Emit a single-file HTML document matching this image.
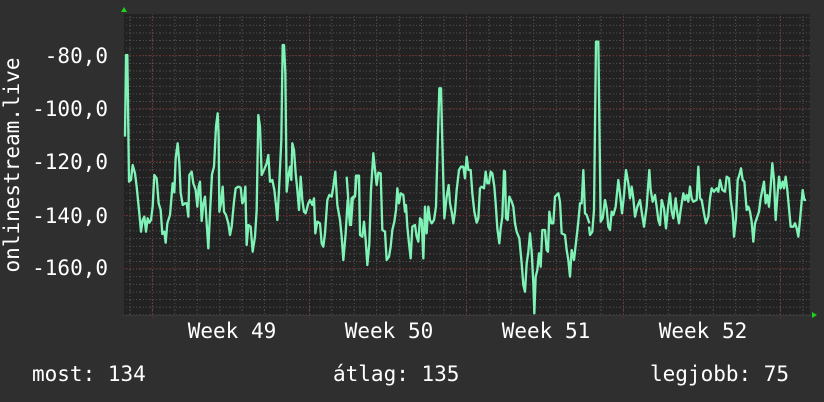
<!DOCTYPE html>
<html><head><meta charset="utf-8"><style>
html,body{margin:0;padding:0;background:#2f2f2f;}
body{width:824px;height:402px;overflow:hidden;position:relative;font-family:"DejaVu Sans Mono","Liberation Mono",monospace;color:#fff;}
</style></head><body>
<svg width="824" height="402" style="position:absolute;left:0;top:0" font-family="DejaVu Sans Mono, Liberation Mono, monospace" fill="#fff">
<defs>
<pattern id="hg" x="0" y="55.3" width="10" height="7.619" patternUnits="userSpaceOnUse">
<line x1="0" y1="0.5" x2="10" y2="0.5" stroke="#4e4e4e" stroke-width="1" stroke-dasharray="1,2"/>
</pattern>
<pattern id="vg" x="129.5" y="0" width="22.43" height="10" patternUnits="userSpaceOnUse">
<line x1="0.5" y1="0" x2="0.5" y2="10" stroke="#4e4e4e" stroke-width="1" stroke-dasharray="1,2"/>
</pattern>
</defs>
<rect x="124" y="14" width="686" height="301" fill="#222"/>
<rect x="124" y="14" width="686" height="301" fill="url(#hg)"/>
<rect x="124" y="14" width="686" height="301" fill="url(#vg)"/>
<g stroke="#7a2a2a" stroke-width="1" stroke-dasharray="1,2">
<line x1="124" y1="55.5" x2="810" y2="55.5"/>
<line x1="124" y1="108.5" x2="810" y2="108.5"/>
<line x1="124" y1="161.5" x2="810" y2="161.5"/>
<line x1="124" y1="215.5" x2="810" y2="215.5"/>
<line x1="124" y1="268.5" x2="810" y2="268.5"/>
<line x1="152.5" y1="14" x2="152.5" y2="318"/>
<line x1="309.5" y1="14" x2="309.5" y2="318"/>
<line x1="466.5" y1="14" x2="466.5" y2="318"/>
<line x1="623.5" y1="14" x2="623.5" y2="318"/>
<line x1="780.5" y1="14" x2="780.5" y2="318"/>
</g>
<line x1="122" y1="315.5" x2="812" y2="315.5" stroke="#3a3a3a"/>
<polygon points="121,12 127,12 124,7" fill="#1ad41a"/>
<polygon points="812,312 812,318 817,315" fill="#1ad41a"/>
<g fill="none" stroke="#7ff2b6" stroke-width="7" stroke-linejoin="round">
<polyline transform="translate(120,30) scale(0.33333)" points="15,320 18,75 22,75 25,300 27,455 33,450 38,405 45,430 50,470 58,550 63,605 68,570 73,560 78,605 83,565 88,578 93,570 98,530 103,435 110,445 116,520 122,540 127,612 133,605 137,638 142,580 150,555 153,520 158,460 163,487 167,385 173,340 178,400 182,488 188,525 195,520 200,520 205,560 208,435 215,425 220,460 227,480 232,530 236,470 240,455 245,573 250,520 255,500 260,580 265,655 270,550 276,433 282,410 288,290 293,250 296,320 298,545 303,520 308,470 312,545 318,555 325,580 330,615 335,590 342,515 347,475 355,470 362,473 367,520 372,510 376,470 380,645 385,585 392,590 398,665 405,620 410,540 415,255 420,290 425,435 432,420 440,400 445,375 450,455 457,450 463,480 468,525 472,570 477,480 484,330 488,45 492,45 496,130 500,485 505,440 510,410 514,450 517,340 522,360 527,430 532,480 537,540 542,440 547,510 552,545 557,550 565,520 570,510 577,525 582,505 586,610 592,575 600,580 605,640 610,650 615,610 622,510 628,495 635,500 640,470 646,425 652,525 660,570 665,620 670,690 677,610 683,510 690,580 695,505 700,500 705,500 710,440 718,440 720,440"/>
<polyline transform="translate(350,30) scale(0.33333)" points="-10,440 0,585 3,585 8,510 15,495 18,437 27,437 30,615 37,620 42,575 47,630 52,705 58,640 63,480 70,370 75,420 80,465 85,428 92,430 97,600 105,605 110,690 117,680 122,650 127,600 133,575 138,540 142,475 147,520 152,490 160,495 165,545 168,525 172,590 177,640 182,685 187,590 195,585 200,620 205,635 210,565 215,570 220,685 225,530 230,610 235,530 240,570 245,580 252,570 258,530 263,345 268,175 273,175 277,340 283,565 290,500 296,465 300,520 305,545 310,580 315,545 320,480 327,420 333,410 340,410 345,445 350,380 355,420 362,420 367,490 373,545 380,578 385,565 390,475 395,470 402,475 407,425 412,460 417,460 422,425 427,430 433,470 437,520 442,595 448,640 452,595 457,560 462,422 465,425 468,565 473,570 478,500 485,515 490,530 495,580 500,605 508,625 515,700 520,765 525,785 530,700 535,665 540,610 545,665 550,760 553,850 557,740 562,720 567,670 572,710 577,600 585,600 590,660 594,665 598,545 604,580 610,580 615,500 625,490 630,515 635,610 645,615 650,660 655,690 660,740 665,660 672,690 680,620 685,575 690,520 695,520 700,420 705,550 710,555 715,570 718,580"/>
<polyline transform="translate(560,140) scale(0.33333)" points="87,260 90,285 97,275 102,210 108,-295 115,-295 122,245 128,235 135,180 140,205 145,260 150,270 155,215 160,225 167,200 175,120 180,160 186,220 192,165 198,90 205,130 210,175 215,140 220,175 225,230 232,200 240,180 245,215 252,260 260,200 268,90 272,150 278,185 285,165 290,200 295,240 300,255 305,180 312,205 318,265 325,195 330,160 335,215 340,235 347,175 352,220 357,250 362,210 370,160 375,180 380,165 385,185 390,140 395,175 400,185 410,180 415,80 420,175 425,180 432,220 438,250 445,230 450,175 455,145 462,155 470,145 475,155 480,120 487,150 495,155 500,110 507,115 512,180 518,220 522,290 528,235 533,120 538,105 543,85 548,120 553,125 560,210 565,200 570,215 575,245 580,305 585,250 592,230 597,215 602,175 607,150 612,125 617,190 622,165 627,200 632,140 637,70 642,120 647,240 652,170 657,110 662,145 668,125 672,145 677,110 682,150 687,205 692,260 700,260 705,250 710,265 715,290 720,240 728,150 733,180 738,180"/>
</g>
<g font-size="21" text-anchor="end">
<text x="108" y="63">-80,0</text>
<text x="108" y="116">-100,0</text>
<text x="108" y="169">-120,0</text>
<text x="108" y="223">-140,0</text>
<text x="108" y="275">-160,0</text>
</g>
<text font-size="21" text-anchor="middle" transform="translate(19,165) rotate(-90)">onlinestream.live</text>
<g font-size="21" text-anchor="middle">
<text x="232" y="338">Week 49</text>
<text x="389" y="338">Week 50</text>
<text x="546" y="338">Week 51</text>
<text x="703" y="338">Week 52</text>
</g>
<g font-size="21">
<text x="32" y="381">most: 134</text>
<text x="333" y="381">átlag: 135</text>
<text x="650" y="381">legjobb: 75</text>
</g>
</svg>
</body></html>
